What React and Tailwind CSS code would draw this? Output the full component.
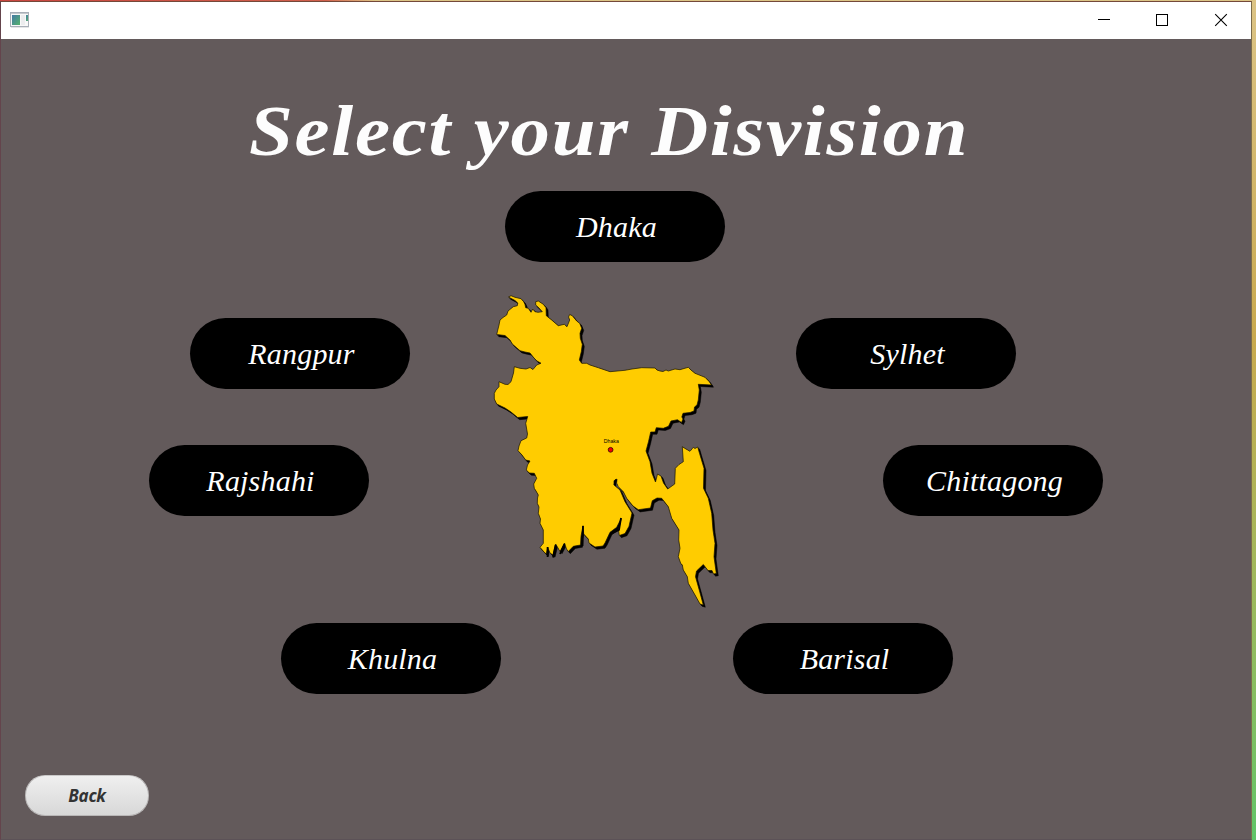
import React from "react";

const OUTLINE =
  "M508.5 297L511 295.7L515 297.3L521 298.7L523.7 301.7L525 304.5L525.7 307.7L528.3 308.3L531 312.3L532.7 309L535 311.7L538 312.3L542.3 311.7L539 308L535.7 305L535.7 301.7L538.3 301L543.3 304.3L546 307.7L546.3 315.7L551.7 320L558.3 325.7L564.3 324.3L567 326.7L569.7 320L568.5 317L569.7 314.5L572.3 315.7L576.7 321L579.7 323.3L581.7 328.3L580 333.3L580.3 338.3L582.3 344.3L581.3 351.7L579.3 360L581.7 363.3L586.7 363.3L590 365L598.3 367.7L610 371.7L625 370.3L632 369L641.7 367.7L655 368L657 370L660 371L663 371.5L666 370L668.3 371L675 369L680 369.7L684 368.5L688.3 367.3L691 370L695 373.3L705 377.3L709.3 381.7L711.5 385L698.3 384.3L699.3 390L698.3 400L697 405L694.5 407L694 411L690 412.5L683 413.3L681.8 417L683 419L681.5 422.5L677.5 419.7L671 421L668.5 426.3L663.3 428.3L656.3 427.7L655 432L650.7 432L648.5 441.7L646 451L650 461.7L652 473.3L655.5 482L657.5 474L661 476L663.5 483L667.7 489L674.7 484L675.3 468.3L679 464.5L683.3 461.7L682.3 446.7L686 449L690 451.3L693.3 447.3L695 448.5L697.7 447L699.5 453.3L704 468.3L703.5 488.3L708.3 498.3L711.7 513.3L713 530L715 543.3L714 556.7L716.3 573.5L713.5 574L712 570.5L708 570.5L703.3 564.5L696.5 571L695.5 576.7L699.5 591L703.3 605L700 604L695 595L688.3 583.3L687.3 576.7L683.3 570L682.3 565L680.7 563.3L678.3 556.7L680 548.3L678.7 540L679 530L671.7 518.3L668.3 506.7L661.7 498.3L657 498L652.3 500.7L650.5 508L638.3 509.7L633 506L626.7 498.3L623.3 491.7L618.3 486.7L616.6 483L617 479L614 480.7L614 485L620 490L625 501.7L632 513L629 526.3L625 533.5L619.3 535.5L618.5 530L621.3 518.3L616.7 527.3L610 532.3L605 543L603 546L595 547L589 543L588.3 539L583.7 534L583 525.7L581 536.3L580.5 545L573.3 546.3L568.3 551.5L566.5 549L564.5 543L560 551.5L558 548L555.7 544L553 555L550 553L547.7 547.3L546.3 554L544.3 552.3L540 547.3L543.3 543.3L543.3 530L540 523.3L540.5 519L538.3 513.3L539 507L537.3 503.3L537.5 498L538.3 495L536 491L534.3 488.3L533.7 484L536.7 478.3L534.3 473.3L529.3 473L526.3 470L527.5 465L530 461L525.7 460L522 455L518 450.7L519 446L521 440.7L526.7 438L527.5 434L525.7 423.3L527.7 416.5L517.7 417.5L511 412L505 408L496.7 404L494.3 399L494.3 393.3L496 390L499 386.7L499 381.7L505 384.3L508 384.5L511 381.7L513.5 373L514.3 366.7L520 368.3L526 369L530 367.5L533 369.5L536.7 365L541 363.2L537 361L534 358L530 353L525 352L520 350.7L512.3 344L510 340L505 335.5L496.7 334.5L497.5 331L499 325L500 320L503 317.5L506.7 315L508 311L513.3 306.7L517.3 305.7L517.8 303L515 300.5Z";

function Map() {
  return (
    <svg className="block h-[322px] w-[232px] shrink-0" viewBox="490 290 232 322" aria-label="Bangladesh">
      <path d={OUTLINE} transform="translate(2 2.2)" fill="#000" stroke="#000" strokeWidth=".5" />
      <path d={OUTLINE} transform="translate(1 1.1)" fill="#000" stroke="#000" strokeWidth=".5" />
      <path d={OUTLINE} fill="#ffcc00" stroke="#191400" strokeWidth=".7" />
      {/* delta inlets */}
      <path
        d="M547.6 547V557M555.6 545L553 557.5M564.5 544L560 554M583 526L582.5 546M616 479.5L614.5 485M621 518L619 530L611 534"
        fill="none"
        stroke="#000"
        strokeWidth="1.8"
      />
      <text x="611.3" y="443" textAnchor="middle" fontSize="5.2" fontFamily="Liberation Sans, sans-serif">Dhaka</text>
      <circle cx="610.6" cy="449.8" r="2.4" fill="#f00000" stroke="#300" strokeWidth=".8" />
    </svg>
  );
}

function Pill({ children, className = "" }) {
  return (
    <button
      className={`h-[71px] w-[220px] shrink-0 rounded-[36px] bg-black pt-px pl-[3px] text-center font-['Liberation_Serif',serif] text-[30px] leading-none tracking-[0.2px] text-white italic ${className}`}
    >
      {children}
    </button>
  );
}

function TitleBar() {
  return (
    <header className="flex h-[37px] shrink-0 items-start justify-between bg-white">
      <svg className="mt-[10px] ml-[9px] h-[16px] w-[20px]" viewBox="0 0 20 16">
        <defs>
          <linearGradient id="pane" x1="0" y1="0" x2="1" y2="1">
            <stop offset="0" stopColor="#4479a5" />
            <stop offset="1" stopColor="#55b36c" />
          </linearGradient>
        </defs>
        <rect x="1" y="15" width="18" height="1" fill="#e5e5e7" />
        <rect x=".5" y=".5" width="18" height="14" fill="#f8f8f8" stroke="#a9afb8" />
        <rect x="1" y="1" width="17" height="1" fill="#c5c9ce" />
        <rect x="2" y="3" width="8" height="10" fill="url(#pane)" />
        <rect x="11" y="3" width="4" height="10" fill="#ececee" />
        <rect x="16" y="3" width="2" height="6" fill="url(#pane)" />
      </svg>
      <svg className="mr-[23px] h-[37px] w-[132px]" viewBox="0 0 132 37" fill="none" stroke="#000">
        <path d="M2 17.5H14" shapeRendering="crispEdges" />
        <rect x="60.5" y="12.5" width="11" height="11" shapeRendering="crispEdges" />
        <path d="M119.2 12.2L130.8 23.8M130.8 12.2L119.2 23.8" strokeWidth="1.1" />
      </svg>
    </header>
  );
}

export default function App() {
  return (
    <div className="flex h-[840px] w-[1256px] overflow-hidden bg-linear-to-b from-[#dcc486] via-[#c9a94e] via-40% to-[#5fc468]">
      <div className="flex w-[1252px] shrink-0 flex-col">
        <div className="h-px shrink-0 bg-linear-to-r from-[#c9453f] via-[#d0604c] via-26% to-[#dcc486] to-30%" />
        <div className="flex w-[1252px] flex-1 flex-col border border-t-[#74493a] border-r-[#7c6c4c] border-b-[#5c5257] border-l-[#64444c] bg-[#635a5b]">
          <TitleBar />
          <main className="flex flex-1 flex-col">
            <h1 className="mt-[56px] ml-[248px] h-[72px] origin-left scale-x-[1.11] font-['Liberation_Serif',serif] text-[71px] leading-[72px] font-bold tracking-[1.6px] whitespace-nowrap text-[#fdfdfd] italic">
              Select your Disvision
            </h1>
            <Pill className="mt-[24px] ml-[504px]">Dhaka</Pill>
            <div className="mt-[28px] flex">
              <div className="flex w-[489px] flex-col gap-[56px] pt-[28px]">
                <Pill className="ml-[189px]">Rangpur</Pill>
                <Pill className="ml-[148px]">Rajshahi</Pill>
              </div>
              <Map />
              <div className="flex flex-col gap-[56px] pt-[28px]">
                <Pill className="ml-[74px]">Sylhet</Pill>
                <Pill className="ml-[161px]">Chittagong</Pill>
              </div>
            </div>
            <div className="mt-[11px] flex gap-[232px] pl-[280px]">
              <Pill>Khulna</Pill>
              <Pill>Barisal</Pill>
            </div>
            <button className="mt-[81px] ml-[24px] h-[41px] w-[124px] rounded-[20px] border border-[#b9b7b7] border-t-[#c9c8c8] bg-linear-to-b from-[#efefef] to-[#d8d8d8] pb-px font-['Open_Sans',sans-serif] text-[17px] leading-none font-bold tracking-[-0.3px] text-[#333] italic">
              Back
            </button>
          </main>
        </div>
      </div>
    </div>
  );
}
